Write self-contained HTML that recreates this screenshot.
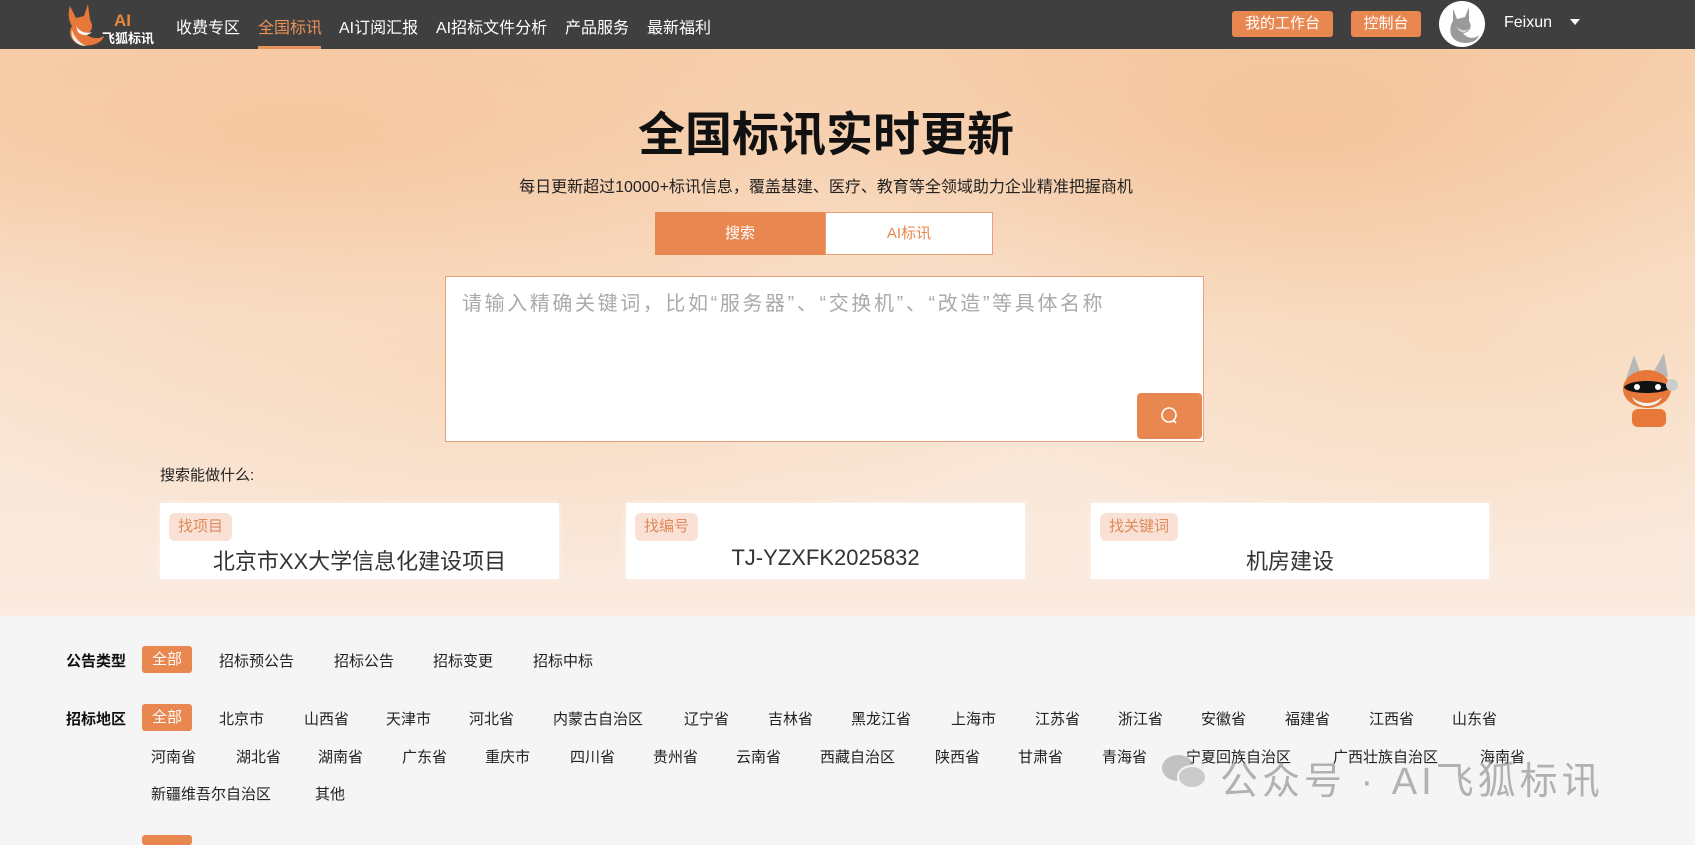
<!DOCTYPE html>
<html><head><meta charset="utf-8"><style>
*{margin:0;padding:0;box-sizing:border-box}
body{width:1695px;height:840px;overflow:hidden;background:#f5f5f5;font-family:"Liberation Sans","Noto Sans CJK SC",sans-serif;position:relative;color:#222}
.abs{position:absolute}
.hdr{left:0;top:0;width:1695px;height:49px;background:#3f3f3f}
.nav{top:14px;font-size:16px;color:#fff;white-space:nowrap}
.btn{background:#e8874f;color:#fff;font-size:15px;border-radius:3px;text-align:center;line-height:26px;height:26px}
.hero{left:0;top:49px;width:1695px;height:567px;
background:
radial-gradient(ellipse 500px 200px at 1300px 80px,rgba(240,175,120,.45),transparent),
radial-gradient(ellipse 700px 180px at 300px 90px,rgba(243,185,135,.5),transparent),
radial-gradient(ellipse 600px 200px at 500px 330px,rgba(248,205,165,.45),transparent),
radial-gradient(ellipse 500px 220px at 1450px 300px,rgba(248,210,170,.45),transparent),
linear-gradient(180deg,#f6d0ae 0%,#f8dcc4 35%,#f9e6d6 65%,#faeadf 100%)}
.title{left:0;width:1652px;top:96px;text-align:center;font-size:47px;font-weight:bold;color:#111}
.sub{left:0;width:1652px;top:173px;text-align:center;font-size:16px;color:#222}
.card{background:#fff;height:76px;top:503px;box-shadow:0 0 6px rgba(255,255,255,.6)}
.tag{position:absolute;left:9px;top:10px;background:#f9e2d5;color:#e0895a;font-size:15px;padding:0 9px;height:28px;line-height:28px;border-radius:6px}
.ct{position:absolute;left:0;right:0;top:41px;text-align:center;font-size:22px;color:#333}
.lbl{font-size:15px;font-weight:bold;color:#111}
.it{font-size:15px;color:#222;white-space:nowrap}
.all{background:#e8874f;color:#fff;font-size:15px;width:50px;height:27px;line-height:27px;text-align:center;border-radius:3px}
</style></head><body>
<div class="abs hdr"></div>
<svg class="abs" style="left:62px;top:2px" width="104" height="46" viewBox="0 0 104 46">
<path d="M8 4 L14 16 L22 14 L26 2 L28 18 C32 24 30 30 24 32 C28 36 36 38 42 34 C40 42 26 46 16 42 C8 38 6 30 10 24 C6 18 6 10 8 4Z" fill="#e8773a"/>
<path d="M14 24 C18 30 24 32 30 30 C26 34 20 34 16 30Z" fill="#fff"/>
<path d="M10 28 C8 36 14 44 24 44 C16 40 12 34 10 28Z" fill="#f3e8dc"/>
<text x="52" y="24" font-size="17" font-weight="bold" fill="#e8873f" font-family="Liberation Sans">AI</text>
<text x="40" y="41" font-size="13" font-weight="bold" fill="#fff" font-family="Noto Sans CJK SC">飞狐标讯</text>
</svg>
<div class="abs nav" style="left:176px">收费专区</div>
<div class="abs nav" style="left:258px;color:#e8935a">全国标讯</div>
<div class="abs" style="left:258px;top:46px;width:63px;height:3px;background:#e8935a"></div>
<div class="abs nav" style="left:339px">AI订阅汇报</div>
<div class="abs nav" style="left:436px">AI招标文件分析</div>
<div class="abs nav" style="left:565px">产品服务</div>
<div class="abs nav" style="left:647px">最新福利</div>
<div class="abs btn" style="left:1232px;top:11px;width:101px">我的工作台</div>
<div class="abs btn" style="left:1351px;top:11px;width:70px">控制台</div>
<div class="abs" style="left:1439px;top:1px;width:46px;height:46px;border-radius:50%;background:#fff;overflow:hidden">
<svg width="46" height="46" viewBox="0 0 46 46"><path d="M14 8 L18 18 L26 16 L30 6 L30 20 C34 26 30 32 24 32 C28 38 36 38 40 34 C38 42 26 44 18 40 C10 36 10 26 14 20Z" fill="#9a9a9a"/><path d="M18 26 C22 30 26 30 30 28 C26 33 20 32 18 26Z" fill="#ddd"/></svg></div>
<div class="abs" style="left:1504px;top:14px;font-size:16px;color:#fff">Feixun</div>
<div class="abs" style="left:1570px;top:19px;width:0;height:0;border-left:5px solid transparent;border-right:5px solid transparent;border-top:6px solid #fff"></div>

<div class="abs hero"></div>
<div class="abs title">全国标讯实时更新</div>
<div class="abs sub">每日更新超过10000+标讯信息，覆盖基建、医疗、教育等全领域助力企业精准把握商机</div>
<div class="abs" style="left:655px;top:212px;width:170px;height:43px;background:#e8874f;color:#fff;font-size:15px;text-align:center;line-height:43px">搜索</div>
<div class="abs" style="left:825px;top:212px;width:168px;height:43px;background:#fff;border:1px solid #e8a07a;color:#e8874f;font-size:15px;text-align:center;line-height:41px">AI标讯</div>
<div class="abs" style="left:445px;top:276px;width:759px;height:166px;background:#fff;border:1px solid #e8a07a"></div>
<div class="abs" style="left:462px;top:287px;font-size:20px;letter-spacing:2.6px;color:#aaa;white-space:nowrap">请输入精确关键词，比如“服务器”、“交换机”、“改造”等具体名称</div>
<div class="abs" style="left:1137px;top:393px;width:65px;height:46px;background:#e8874f;border-radius:4px">
<svg width="65" height="46"><circle cx="32" cy="22" r="7" fill="none" stroke="#fff" stroke-width="1.6"/><path d="M36 27 L39 30" stroke="#fff" stroke-width="1.6"/></svg></div>
<svg class="abs" style="left:1612px;top:345px" width="70" height="82" viewBox="0 0 70 82">
<path d="M22 10 L30 32 L14 34Z M52 8 L56 32 L40 30Z" fill="#b8b8b8"/>
<ellipse cx="35" cy="44" rx="24" ry="19" fill="#e8773a"/>
<path d="M12 42 C18 34 52 34 58 42 C56 50 14 50 12 42Z" fill="#111"/>
<circle cx="25" cy="42" r="3" fill="#fff"/><circle cx="46" cy="42" r="3" fill="#fff"/>
<path d="M20 52 C28 60 42 60 50 52 C46 64 24 64 20 52Z" fill="#f2f2f2"/>
<circle cx="60" cy="40" r="6" fill="#ccc"/>
<rect x="20" y="64" width="34" height="18" rx="6" fill="#e8773a"/>
</svg>
<div class="abs" style="left:160px;top:464px;font-size:15px;color:#222">搜索能做什么:</div>
<div class="abs card" style="left:160px;width:399px"><span class="tag">找项目</span><div class="ct">北京市XX大学信息化建设项目</div></div>
<div class="abs card" style="left:626px;width:399px"><span class="tag">找编号</span><div class="ct" style="top:42px">TJ-YZXFK2025832</div></div>
<div class="abs card" style="left:1091px;width:398px"><span class="tag">找关键词</span><div class="ct">机房建设</div></div>

<div class="abs lbl" style="left:66px;top:650px">公告类型</div>
<div class="abs all" style="left:142px;top:646px">全部</div>
<div class="abs it" style="left:219px;top:650px">招标预公告</div>
<div class="abs it" style="left:334px;top:650px">招标公告</div>
<div class="abs it" style="left:433px;top:650px">招标变更</div>
<div class="abs it" style="left:533px;top:650px">招标中标</div>

<div class="abs lbl" style="left:66px;top:708px">招标地区</div>
<div class="abs all" style="left:142px;top:704px">全部</div>
<div class="abs it" style="left:219px;top:708px">北京市</div>
<div class="abs it" style="left:304px;top:708px">山西省</div>
<div class="abs it" style="left:386px;top:708px">天津市</div>
<div class="abs it" style="left:469px;top:708px">河北省</div>
<div class="abs it" style="left:553px;top:708px">内蒙古自治区</div>
<div class="abs it" style="left:684px;top:708px">辽宁省</div>
<div class="abs it" style="left:768px;top:708px">吉林省</div>
<div class="abs it" style="left:851px;top:708px">黑龙江省</div>
<div class="abs it" style="left:951px;top:708px">上海市</div>
<div class="abs it" style="left:1035px;top:708px">江苏省</div>
<div class="abs it" style="left:1118px;top:708px">浙江省</div>
<div class="abs it" style="left:1201px;top:708px">安徽省</div>
<div class="abs it" style="left:1285px;top:708px">福建省</div>
<div class="abs it" style="left:1369px;top:708px">江西省</div>
<div class="abs it" style="left:1452px;top:708px">山东省</div>

<div class="abs it" style="left:151px;top:746px">河南省</div>
<div class="abs it" style="left:236px;top:746px">湖北省</div>
<div class="abs it" style="left:318px;top:746px">湖南省</div>
<div class="abs it" style="left:402px;top:746px">广东省</div>
<div class="abs it" style="left:485px;top:746px">重庆市</div>
<div class="abs it" style="left:570px;top:746px">四川省</div>
<div class="abs it" style="left:653px;top:746px">贵州省</div>
<div class="abs it" style="left:736px;top:746px">云南省</div>
<div class="abs it" style="left:820px;top:746px">西藏自治区</div>
<div class="abs it" style="left:935px;top:746px">陕西省</div>
<div class="abs it" style="left:1018px;top:746px">甘肃省</div>
<div class="abs it" style="left:1102px;top:746px">青海省</div>
<div class="abs it" style="left:1186px;top:746px">宁夏回族自治区</div>
<div class="abs it" style="left:1333px;top:746px">广西壮族自治区</div>
<div class="abs it" style="left:1480px;top:746px">海南省</div>

<div class="abs it" style="left:151px;top:783px">新疆维吾尔自治区</div>
<div class="abs it" style="left:315px;top:783px">其他</div>
<div class="abs" style="left:142px;top:835px;width:50px;height:10px;background:#e8874f;border-radius:3px"></div>

<div class="abs" style="left:1160px;top:752px;width:48px;height:40px;opacity:.55">
<svg width="48" height="40"><ellipse cx="18" cy="16" rx="16" ry="13" fill="#999"/><ellipse cx="32" cy="25" rx="14" ry="11" fill="#aaa" stroke="#f5f5f5" stroke-width="2"/></svg></div>
<div class="abs" style="left:1220px;top:750px;font-size:38px;letter-spacing:4px;color:rgba(120,120,120,.55);white-space:nowrap">公众号 · AI飞狐标讯</div>
</body></html>
